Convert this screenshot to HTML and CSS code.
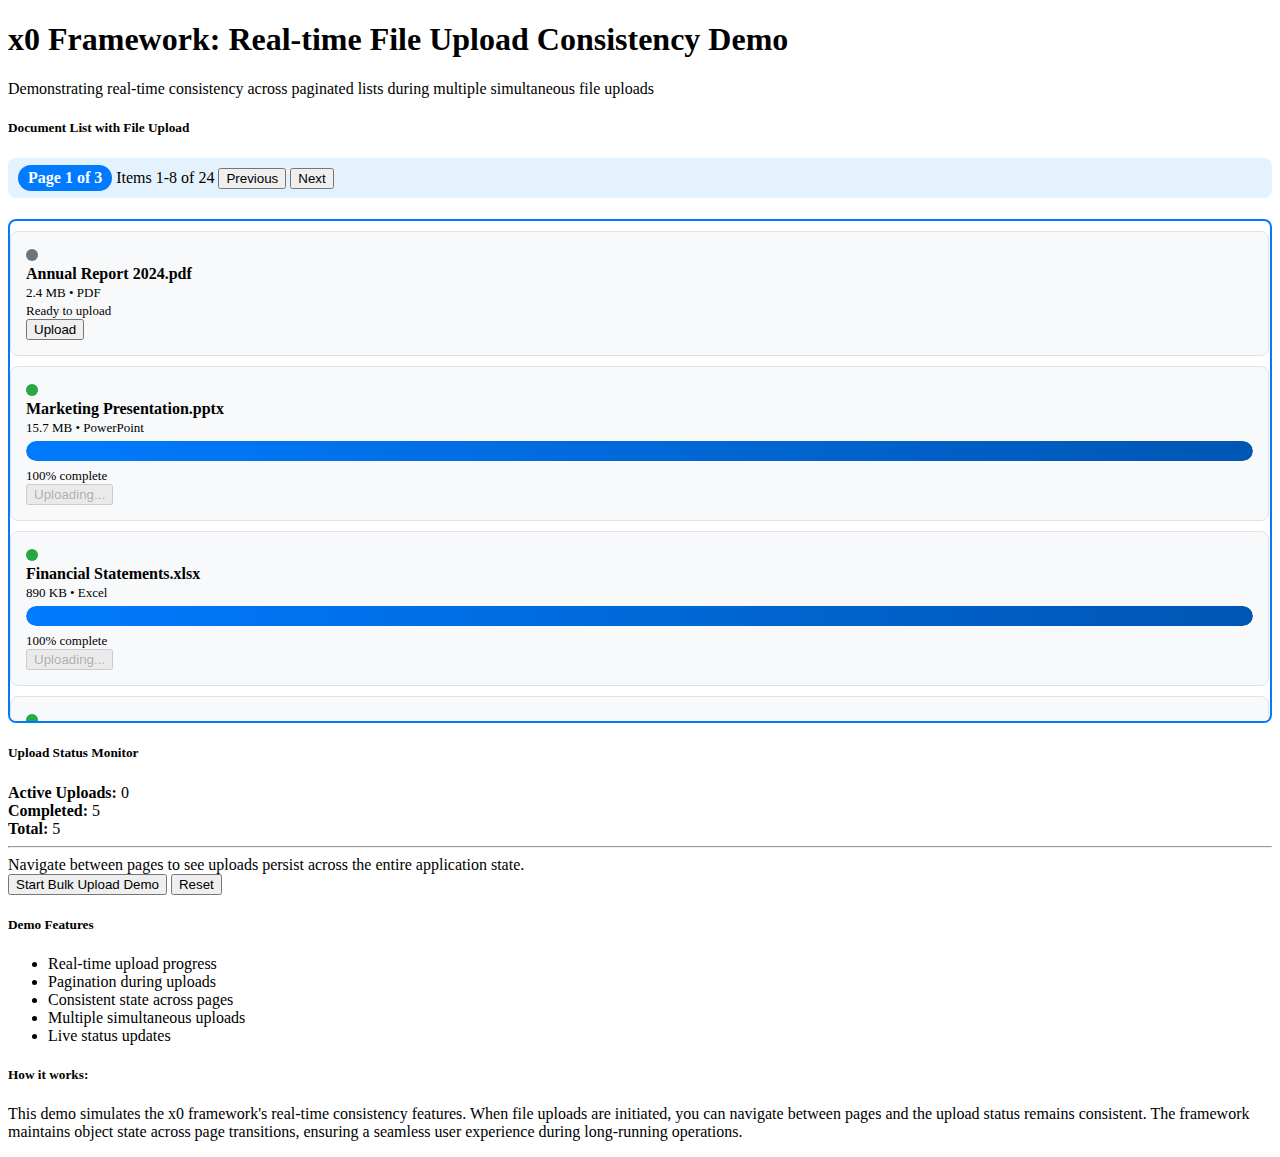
FILE: index.html
```html
<!DOCTYPE html>
<html>
<head>
<meta charset="utf-8">
<title>x0 Framework Demo</title>
<link rel="stylesheet" href="styles.css">
</head>
<body>
<h1>x0 Framework: Real-time File Upload Consistency Demo</h1>
<p>Demonstrating real-time consistency across paginated lists during multiple simultaneous file uploads</p>

<h5>Document List with File Upload</h5>
<div class="pager">
  <span class="badge">Page 1 of 3</span>
  <span class="range">Items 1-8 of 24</span>
  <button>Previous</button>
  <button>Next</button>
</div>

<div class="list">
  <div class="item">
    <div class="dot dot-idle"></div>
    <div class="name">Annual Report 2024.pdf</div>
    <div class="meta">2.4 MB • PDF</div>
    <div class="status">Ready to upload</div>
    <button class="act">Upload</button>
  </div>
  <div class="item">
    <div class="dot dot-done"></div>
    <div class="name">Marketing Presentation.pptx</div>
    <div class="meta">15.7 MB • PowerPoint</div>
    <div class="bar"><div class="fill" style="width:100%"></div></div>
    <div class="status status-after-bar">100% complete</div>
    <button class="act" disabled>Uploading...</button>
  </div>
  <div class="item">
    <div class="dot dot-done"></div>
    <div class="name">Financial Statements.xlsx</div>
    <div class="meta">890 KB • Excel</div>
    <div class="bar"><div class="fill" style="width:100%"></div></div>
    <div class="status status-after-bar">100% complete</div>
    <button class="act" disabled>Uploading...</button>
  </div>
  <div class="item">
    <div class="dot dot-done"></div>
    <div class="name">Project Proposal.docx</div>
    <div class="meta">1.2 MB • Word</div>
    <div class="bar"><div class="fill" style="width:100%"></div></div>
    <div class="status status-after-bar">100% complete</div>
    <button class="act" disabled>Uploading...</button>
  </div>
</div>

<h5>Upload Status Monitor</h5>
<div class="stats">
  <div><strong>Active Uploads:</strong> 0</div>
  <div><strong>Completed:</strong> 5</div>
  <div><strong>Total:</strong> 5</div>
</div>
<hr>
<div>Navigate between pages to see uploads persist across the entire application state.</div>
<div class="controls">
  <button>Start Bulk Upload Demo</button>
  <button>Reset</button>
</div>

<h5>Demo Features</h5>
<ul>
  <li>Real-time upload progress</li>
  <li>Pagination during uploads</li>
  <li>Consistent state across pages</li>
  <li>Multiple simultaneous uploads</li>
  <li>Live status updates</li>
</ul>

<h5>How it works:</h5>
<p>This demo simulates the x0 framework's real-time consistency features. When file uploads are initiated, you can navigate between pages and the upload status remains consistent. The framework maintains object state across page transitions, ensuring a seamless user experience during long-running operations.</p>
</body>
</html>
```

FILE: styles.css
```css
body {
  margin: 8px;
  font-family: "Liberation Serif", "Times New Roman", serif;
  font-size: 16px;
  color: #000;
  background: #fff;
}

h1 {
  margin-top: 13.44px;
}

button {
  font-family: "Liberation Sans", Arial, sans-serif;
}

.pager {
  display: flex;
  align-items: center;
  gap: 4px;
  height: 40px;
  padding: 0 10px;
  background: #e3f2fd;
  border-radius: 8px;
  margin-bottom: 21px;
}

.badge {
  background: #007bff;
  color: #fff;
  font-weight: bold;
  padding: 4px 10px;
  border-radius: 14px;
}

.list {
  border: 2px solid #007bff;
  border-radius: 8px;
  height: 490px;
  padding: 10px 0 0;
  overflow: hidden;
}

.item {
  background: #f8f9fa;
  border: 1px solid #dee2e6;
  border-radius: 8px;
  padding: 15px;
  margin: 0 1px 10px 0;
}

.dot {
  width: 12px;
  height: 12px;
  border-radius: 50%;
  margin: 2px 0 4px;
}

.dot-idle { background: #6c757d; }
.dot-done { background: #28a745; }

.name {
  font-weight: bold;
  font-size: 16px;
  line-height: 18px;
}

.meta {
  font-size: 13px;
  line-height: 15px;
  margin-top: 2px;
}

.status {
  font-size: 13px;
  line-height: 15px;
  margin-top: 3px;
}

.status-after-bar {
  margin-top: 7px;
}

.act {
  display: block;
  margin-top: 1px;
}

.bar {
  height: 20px;
  margin-top: 6px;
  background: #e9ecef;
  border-radius: 10px;
  overflow: hidden;
}

.fill {
  height: 100%;
  border-radius: 10px;
  background: linear-gradient(90deg, #007bff, #0056b3);
}

hr {
  margin: 8px 0;
}
```
